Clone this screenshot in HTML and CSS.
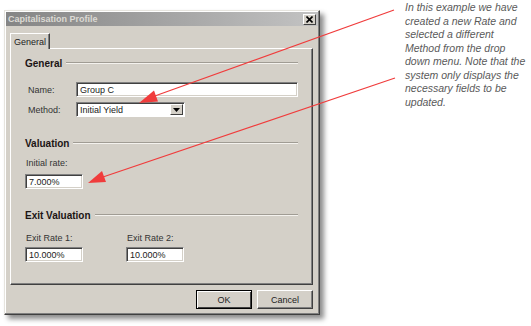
FILE: index.html
```html
<!DOCTYPE html>
<html lang="en">
<head>
  <meta charset="UTF-8">
  <title>Capitalisation Profile</title>
  <link rel="stylesheet" href="styles.css">
</head>
<body>
  <div class="page">
    <!-- Dialog -->
    <div class="dialog">
      <div class="titlebar">
        <span class="title">Capitalisation Profile</span>
        <span class="close-btn">
          <svg width="7" height="7" viewBox="0 0 7 7"><path d="M0.5 0.5 L6.5 6.5 M6.5 0.5 L0.5 6.5" stroke="#000" stroke-width="1.6"/></svg>
        </span>
      </div>

      <div class="dialog-body">
        <div class="tabs">
          <div class="tab">General</div>
        </div>

        <div class="tab-panel">
          <!-- General -->
          <div class="group-title first"><span>General</span><i class="rule"></i></div>
          <div class="field-row name-row">
            <label>Name:</label>
            <div class="textbox wide">Group C</div>
          </div>
          <div class="field-row method-row">
            <label>Method:</label>
            <div class="combo">
              <span class="combo-text">Initial Yield</span>
              <span class="combo-btn">
                <svg width="7" height="4" viewBox="0 0 7 4"><path d="M0 0 H7 L3.5 4 Z" fill="#000"/></svg>
              </span>
            </div>
          </div>

          <!-- Valuation -->
          <div class="group-title valuation"><span>Valuation</span><i class="rule"></i></div>
          <div class="stack">
            <label>Initial rate:</label>
            <div class="textbox short">7.000%</div>
          </div>

          <!-- Exit Valuation -->
          <div class="group-title exit"><span>Exit Valuation</span><i class="rule"></i></div>
          <div class="exit-row">
            <div class="stack">
              <label>Exit Rate 1:</label>
              <div class="textbox short">10.000%</div>
            </div>
            <div class="stack">
              <label>Exit Rate 2:</label>
              <div class="textbox short">10.000%</div>
            </div>
          </div>
        </div>

        <div class="buttons">
          <button class="btn default">OK</button>
          <button class="btn">Cancel</button>
        </div>
      </div>
    </div>

    <!-- Callout text -->
    <p class="note">
      In this example we have<br>
      created a new Rate and<br>
      selected a different<br>
      Method from the drop<br>
      down menu. Note that the<br>
      system only displays the<br>
      necessary fields to be<br>
      updated.
    </p>

    <!-- Red pointer arrows over the dialog -->
    <svg class="arrows" width="531" height="326" viewBox="0 0 531 326">
      <line x1="394" y1="10" x2="152" y2="97" stroke="#f03c3c" stroke-width="1.2"/>
      <polygon points="139,103 158,101.5 154,90.5" fill="#f03c3c"/>
      <line x1="395" y1="78" x2="100" y2="178" stroke="#f03c3c" stroke-width="1.2"/>
      <polygon points="88,183 106,182 102,171" fill="#f03c3c"/>
    </svg>
  </div>
</body>
</html>
```

FILE: styles.css
```css
* {
  box-sizing: border-box;
}

body {
  margin: 0;
  background-color: #ffffff;
  font-family: "Liberation Sans", Arial, sans-serif;
}

.page {
  position: relative;
  width: 531px;
  height: 326px;
  display: flex;
  align-items: flex-start;
}

/* Dialog window */
.dialog {
  margin: 10px 0 0 4px;
  width: 316px;
  height: 305px;
  background-color: #d4d0c8;
  border: 1px solid;
  border-color: #e6e4de #404040 #404040 #e6e4de;
  box-shadow: inset -1px -1px #808080, inset 1px 1px #ffffff, 4px 4px 5px rgba(0, 0, 0, 0.45);
  padding: 1px;
  display: flex;
  flex-direction: column;
}

.titlebar {
  height: 14px;
  background: linear-gradient(to right, #858585, #a9a9a9 60%, #c3c3c3);
  display: flex;
  align-items: center;
  justify-content: space-between;
  padding: 0 2px 0 2px;
}

.title {
  font-size: 9px;
  font-weight: bold;
  color: #dcdad4;
}

.close-btn {
  width: 13px;
  height: 11px;
  background-color: #d4d0c8;
  border: 1px solid;
  border-color: #ffffff #404040 #404040 #ffffff;
  display: flex;
  align-items: center;
  justify-content: center;
}

.dialog-body {
  padding: 7px 5px 0 4px;
  display: flex;
  flex-direction: column;
}

/* Tabs */
.tabs {
  display: flex;
}

.tab {
  width: 40px;
  height: 16px;
  font-size: 9px;
  color: #222;
  padding-top: 3px;
  text-align: center;
  border: 1px solid;
  border-bottom: none;
  border-color: #ffffff #404040 #404040 #ffffff;
  box-shadow: inset -1px 0 #808080;
  margin-bottom: -1px;
  background-color: #d4d0c8;
  position: relative;
  z-index: 1;
}

.tab-panel {
  height: 237px;
  border: 1px solid;
  border-color: #ffffff #404040 #404040 #ffffff;
  box-shadow: inset -1px -1px #808080;
  padding: 0 14px 0 14px;
}

.group-title {
  display: flex;
  align-items: center;
  height: 12px;
  font-size: 10px;
  font-weight: bold;
  color: #1c1414;
}

.group-title.first {
  margin-top: 8px;
}

.group-title.valuation {
  margin-top: 20px;
}

.group-title.exit {
  margin-top: 20px;
}

.rule {
  flex: 1;
  margin-left: 4px;
  height: 2px;
  border-top: 1px solid #a09c94;
  border-bottom: 1px solid #f4f2ee;
}

label {
  font-size: 9px;
  color: #333;
}

.field-row {
  display: flex;
  align-items: center;
  padding-left: 3px;
}

.field-row label {
  width: 48px;
}

.name-row {
  margin-top: 13px;
}

.method-row {
  margin-top: 5px;
}

.textbox {
  height: 15px;
  background-color: #ffffff;
  border: 1px solid;
  border-color: #808080 #ffffff #ffffff #808080;
  box-shadow: inset 1px 1px #404040, inset -1px -1px #d4d0c8;
  font-size: 9px;
  color: #222;
  padding: 2px 0 0 3px;
}

.textbox.wide {
  flex: 1;
}

.textbox.short {
  width: 58px;
}

.combo {
  width: 109px;
  height: 15px;
  background-color: #ffffff;
  border: 1px solid;
  border-color: #808080 #ffffff #ffffff #808080;
  box-shadow: inset 1px 1px #404040;
  display: flex;
  padding: 1px 1px 1px 1px;
}

.combo-text {
  flex: 1;
  font-size: 9px;
  color: #222;
  padding: 1px 0 0 2px;
}

.combo-btn {
  width: 13px;
  background-color: #d4d0c8;
  border: 1px solid;
  border-color: #ffffff #404040 #404040 #ffffff;
  display: flex;
  align-items: center;
  justify-content: center;
}

.stack {
  display: flex;
  flex-direction: column;
  align-items: flex-start;
}

.stack label {
  height: 12px;
  padding-left: 1px;
  margin-bottom: 4px;
}

.group-title.valuation + .stack {
  margin-top: 9px;
}

.exit-row {
  display: flex;
  gap: 43px;
  margin-top: 12px;
}

.exit-row .stack label {
  margin-bottom: 2px;
}

/* Buttons */
.buttons {
  display: flex;
  justify-content: flex-end;
  gap: 5px;
  margin-top: 5px;
}

.btn {
  width: 56px;
  height: 19px;
  font-family: "Liberation Sans", Arial, sans-serif;
  font-size: 9px;
  color: #222;
  background-color: #d4d0c8;
  border: 1px solid;
  border-color: #ffffff #404040 #404040 #ffffff;
  box-shadow: inset -1px -1px #808080;
  padding: 0;
}

.btn.default {
  outline: 1px solid #000;
  outline-offset: -1px;
  border-color: #000;
  box-shadow: inset 1px 1px #ffffff, inset -1px -1px #404040;
}

/* Callout */
.note {
  margin: 1px 0 0 85px;
  font-size: 10.5px;
  line-height: 13.5px;
  font-style: italic;
  color: #5a5a5a;
}

.arrows {
  position: absolute;
  left: 0;
  top: 0;
  pointer-events: none;
}
```
